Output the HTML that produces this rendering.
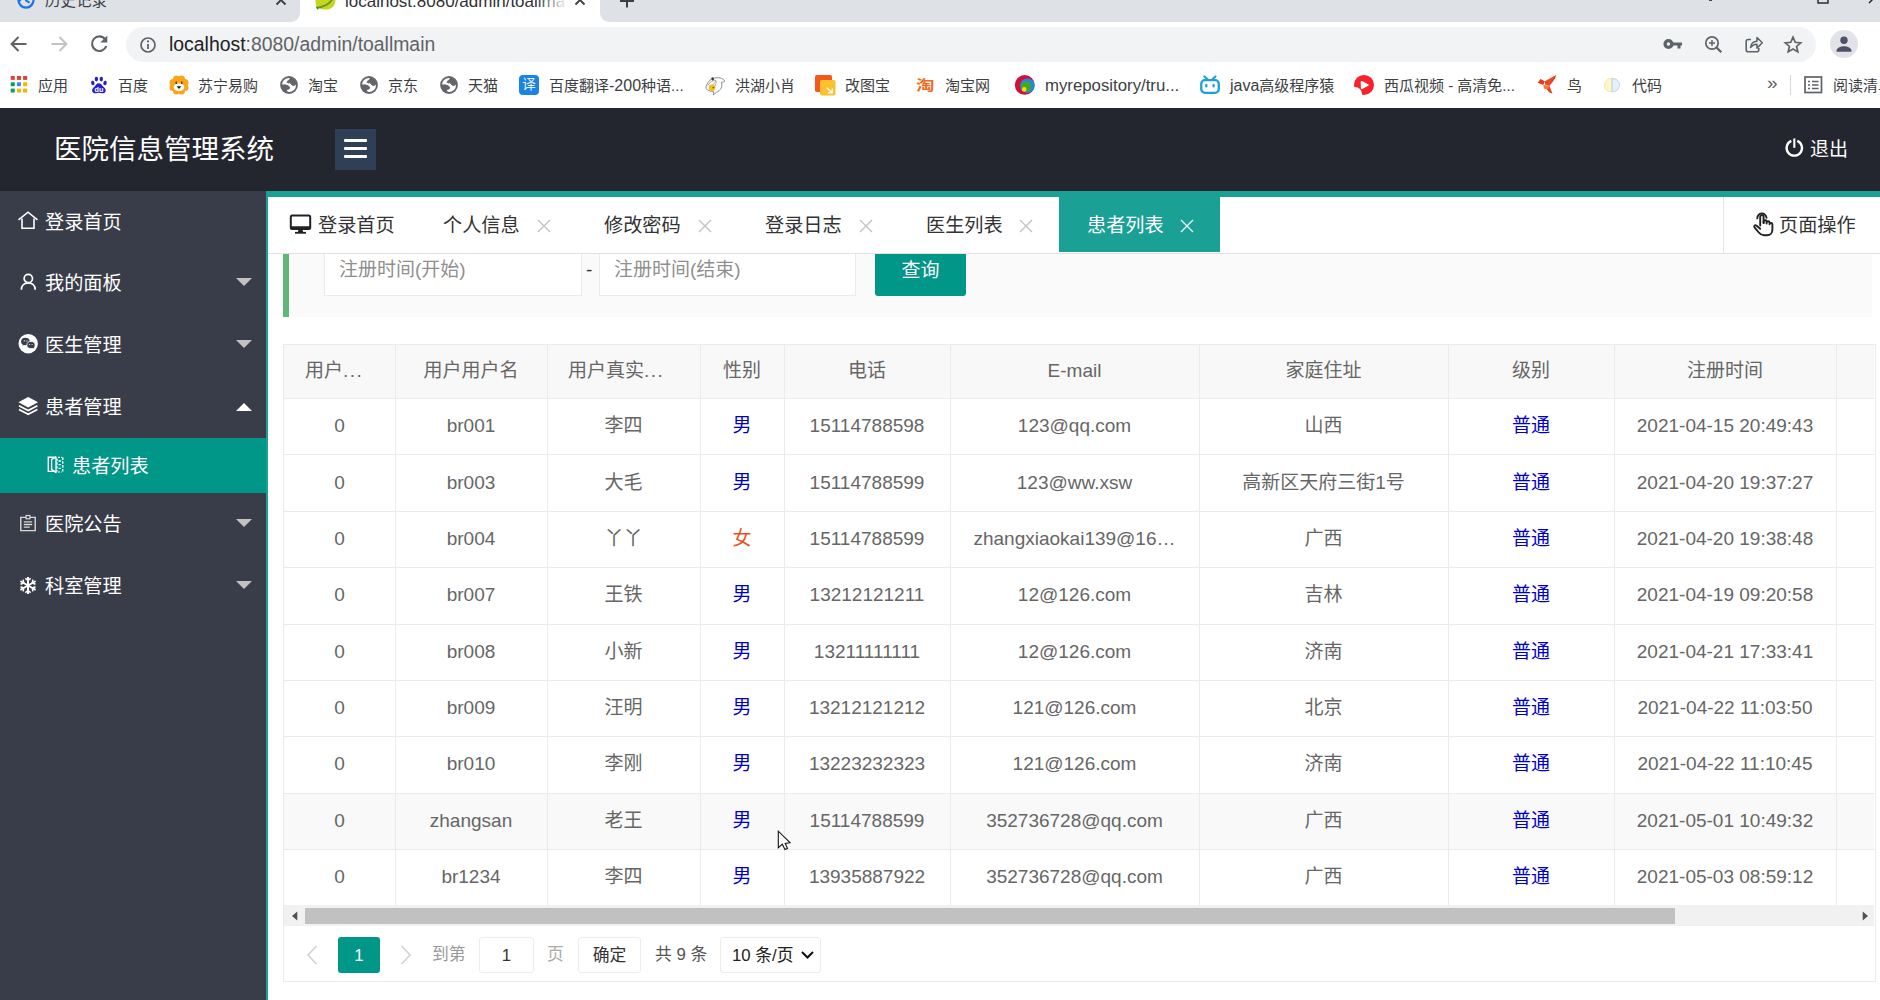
<!DOCTYPE html>
<html lang="zh-CN">
<head>
<meta charset="utf-8">
<title>医院信息管理系统</title>
<style>
*{box-sizing:border-box;margin:0;padding:0}
html,body{width:1880px;height:1000px;overflow:hidden;background:#fff}
body{font-family:"Liberation Sans","Noto Sans CJK SC",sans-serif;color:#333;position:relative}
.abs{position:absolute}
svg{display:block}
/* ---------- browser chrome ---------- */
#tabstrip{left:0;top:0;width:1880px;height:22px;background:#fff}
#tab1{left:0;top:-14px;width:300px;height:36px;background:#dee1e6;border-radius:0 0 9px 0}
#tab2{left:600px;top:-14px;width:1280px;height:36px;background:#dee1e6;border-radius:0 0 0 9px}
.tabtxt{font-size:16px;line-height:20px;white-space:nowrap;color:#3c4043}
#toolbar{left:0;top:22px;width:1880px;height:43px;background:#fff}
#omni{left:126px;top:27px;width:1690px;height:35px;border-radius:17.5px;background:#f1f3f4}
#url{left:169px;top:32px;font-size:19.4px;line-height:24px;color:#5f6368;white-space:nowrap}
#url b{font-weight:normal;color:#202124}
#bookbar{left:0;top:65px;width:1880px;height:43px;background:#fff}
.bk{top:76px;font-size:15px;line-height:20px;color:#3c4043;white-space:nowrap}
.ico{top:75px;width:20px;height:20px}
/* ---------- app ---------- */
#header{left:0;top:108px;width:1880px;height:83px;background:#23262e}
#logo{left:54px;top:130px;font-size:27.5px;line-height:40px;color:#fff;white-space:nowrap}
#hamb{left:335px;top:129px;width:41px;height:41px;background:#2f4056}
#hamb i{position:absolute;left:9px;width:22.5px;height:3px;background:#fff;border-radius:1px}
#logout{left:1810px;top:137px;font-size:19px;line-height:26px;color:#fff;white-space:nowrap}
#side{left:0;top:191px;width:266px;height:809px;background:#393d49}
.nav{left:45px;font-size:19.2px;line-height:28px;color:#fff;white-space:nowrap}
.arr{left:236px;width:0;height:0;border-left:8px solid transparent;border-right:8px solid transparent}
.arr.d{border-top:8px solid #c2c2c2}
.arr.u{border-bottom:8px solid #fff}
#navact{left:0;top:438px;width:266px;height:55px;background:#009688}
#tealtop{left:266px;top:191px;width:1614px;height:6px;background:#1aa094}
#tealleft{left:266px;top:191px;width:2px;height:809px;background:#1aa094}
/* tabs */
#tabbar{left:268px;top:197px;width:1612px;height:57px;background:#fff;border-bottom:1px solid #e2e2e2}
.tt{top:212px;font-size:19.2px;line-height:28px;color:#333;white-space:nowrap}
.tx{top:218px;width:16px;height:16px}
#tabact{left:1059px;top:197px;width:161px;height:55px;background:#1aa094}
#pageop{left:1723px;top:197px;width:157px;height:56px;border-left:1px solid #e6e6e6;background:#fff}
/* quote / search */
#quote{left:283px;top:254px;width:1589px;height:63px;background:#fafafa;border-left:6px solid #5fb878}
.inp{top:254px;height:42px;background:#fff;border:1px solid #ebebeb;border-top:none;font-size:19px;line-height:32px;color:#8f8f8f;padding-left:14px;white-space:nowrap}
#btn{left:875px;top:254px;width:91px;height:42px;background:#009688;border-radius:0 0 3px 3px;color:#fff;font-size:19px;line-height:34px;text-align:center}
/* table */
#tbl{left:283px;top:344px;width:1593px;height:638px;border:1px solid #ebebeb;background:#fff}
#thead{left:284px;top:345px;width:1590px;height:53px;background:#f8f8f8}
.hl{left:284px;width:1590px;height:1px;background:#ebebeb}
.vl{top:345px;width:1px;height:560px;background:#ebebeb}
.c{position:absolute;font-size:19px;line-height:28px;color:#666;text-align:center;white-space:nowrap}
.blue{color:#0000c8}
.red{color:#e8501e}
#hov{left:284px;top:793px;width:1590px;height:56px;background:#f9f9f9}
/* scrollbar */
#sb{left:284px;top:905px;width:1590px;height:21px;background:#f1f1f1}
#sbt{left:305px;top:908px;width:1370px;height:16px;background:#c1c1c1}
/* pager */
.pg{font-size:16.8px;line-height:24px;white-space:nowrap;color:#333}
</style>
</head>
<body>
<!-- BROWSER CHROME -->
<div id="tabstrip" class="abs"></div>
<div id="tab1" class="abs"></div>
<div id="tab2" class="abs"></div>
<div id="toolbar" class="abs"></div>
<div id="omni" class="abs"></div>
<div id="url" class="abs"><b>localhost</b>:8080/admin/toallmain</div>
<div id="bookbar" class="abs"></div>
<!--CHROME-ITEMS-->
<svg class="abs" style="left:16px;top:-10px" width="20" height="20" viewBox="0 0 20 20"><circle cx="10" cy="10" r="7.6" fill="none" stroke="#1a73e8" stroke-width="2.2"/><path d="M10 5.500v5l3.500 2.200" stroke="#1a73e8" stroke-width="2" fill="none"/><path d="M0 6.500h6.500v6.500z" fill="#e3e5e9"/><path d="M0.500 8.500l3 3.800 3.600-3.800z" fill="#1a73e8"/></svg>
<div class="abs tabtxt" style="left:45px;top:-9.500px;font-size:15.500px">历史记录</div>
<svg class="abs" style="left:274px;top:-7px" width="14" height="14" viewBox="0 0 14 14"><path d="M2.500 2.500l9 9M11.500 2.500l-9 9" stroke="#3c4043" stroke-width="1.9" fill="none"/></svg>
<svg class="abs" style="left:314px;top:-12px" width="23" height="23" viewBox="0 0 23 23"><path d="M1.500 12C1.500 4 6 0 11.500 0S21.500 4 21.500 12c0 5-3.500 9.500-9 9.500-3 0-6-0.300-8.500-1.500C2 19 1.500 15.500 1.500 12z" fill="#c4d524"/><path d="M3.200 19.600C10 19 16.500 15.500 18.600 10.500" stroke="#6c9714" stroke-width="1.900" fill="none" stroke-linecap="round"/><path d="M3 19.200l0.800 1.600" stroke="#4f7f1a" stroke-width="1.400" stroke-linecap="round"/></svg>
<div class="abs tabtxt" style="left:345px;top:-8.500px;width:221px;overflow:hidden;font-size:17px;color:#303134">localhost:8080/admin/toallmain</div>
<div class="abs" style="left:536px;top:-10px;width:32px;height:22px;background:linear-gradient(90deg,rgba(255,255,255,0),#fff)"></div>
<svg class="abs" style="left:573px;top:-7px" width="14" height="14" viewBox="0 0 14 14"><path d="M2.500 2.500l9 9M11.500 2.500l-9 9" stroke="#3c4043" stroke-width="1.900" fill="none"/></svg>
<svg class="abs" style="left:619px;top:-7.5px" width="16" height="16" viewBox="0 0 16 16"><path d="M8 1v13.500M1 8h14" stroke="#3c4043" stroke-width="2" fill="none"/></svg>
<svg class="abs" style="left:1704px;top:-8px" width="14" height="12" viewBox="0 0 14 12"><path d="M5 8.300h3" stroke="#202124" stroke-width="1"/></svg>
<svg class="abs" style="left:1817px;top:-8px" width="14" height="12" viewBox="0 0 14 12"><rect x="1" y="1" width="10" height="10" fill="none" stroke="#202124" stroke-width="1.400"/></svg>
<svg class="abs" style="left:1868px;top:-8px" width="14" height="12" viewBox="0 0 14 12"><path d="M1 11L12 0" stroke="#202124" stroke-width="1.400"/></svg>
<svg class="abs" style="left:9px;top:34px" width="20" height="20" viewBox="0 0 20 20"><path d="M17.500 10H3M9.500 3L2.600 10l6.900 7" stroke="#5f6368" stroke-width="2" fill="none"/></svg>
<svg class="abs" style="left:49px;top:34px" width="20" height="20" viewBox="0 0 20 20"><path d="M2.500 10H17M10.500 3l6.900 7-6.900 7" stroke="#c0c3c7" stroke-width="2" fill="none"/></svg>
<svg class="abs" style="left:88px;top:33px" width="22" height="22" viewBox="0 0 22 22"><path d="M17.200 6.300A7.300 7.300 0 1 0 18.300 13" stroke="#5f6368" stroke-width="2.100" fill="none"/><path d="M19.300 2.500v7h-7z" fill="#5f6368"/></svg>
<svg class="abs" style="left:139px;top:36px" width="18" height="18" viewBox="0 0 18 18"><circle cx="9" cy="9" r="7" fill="none" stroke="#5f6368" stroke-width="1.700"/><path d="M9 8v5" stroke="#5f6368" stroke-width="1.800"/><circle cx="9" cy="5.400" r="1.100" fill="#5f6368"/></svg>
<svg class="abs" style="left:1663px;top:35px" width="20" height="18" viewBox="0 0 20 18"><circle cx="5.500" cy="9" r="3.400" fill="none" stroke="#5f6368" stroke-width="3.400"/><path d="M9 9h10M16 9v4.500" stroke="#5f6368" stroke-width="3" fill="none"/></svg>
<svg class="abs" style="left:1702px;top:33px" width="22" height="22" viewBox="0 0 22 22"><circle cx="10" cy="10" r="6.200" fill="none" stroke="#5f6368" stroke-width="1.700"/><path d="M10 7v6M7 10h6" stroke="#5f6368" stroke-width="1.500"/><path d="M14.500 14.500l4.800 4.800" stroke="#5f6368" stroke-width="2.200"/></svg>
<svg class="abs" style="left:1743px;top:34px" width="22" height="20" viewBox="0 0 22 20"><path d="M8 5.500H5.200a2 2 0 0 0-2 2v8.300a2 2 0 0 0 2 2h8.600a2 2 0 0 0 2-2V14" stroke="#5f6368" stroke-width="1.600" fill="none"/><path d="M7.500 13.500c0.500-4 3-6 6.500-6.200V3.500l5.300 5.300-5.300 5.300v-3.800c-2.700 0-4.800 0.900-6.500 3.200z" stroke="#5f6368" stroke-width="1.500" fill="none" stroke-linejoin="round"/></svg>
<svg class="abs" style="left:1782px;top:33px" width="22" height="22" viewBox="0 0 22 22"><path transform="translate(11 12.200) scale(0.890) translate(-11 -11.800)" d="M11 2.800l2.500 5.700 6.200 0.600-4.700 4.100 1.400 6.100L11 16.100l-5.400 3.200 1.400-6.100L2.300 9.100l6.200-0.600z" stroke="#5f6368" stroke-width="1.900" fill="none" stroke-linejoin="miter"/></svg>
<svg class="abs" style="left:1830px;top:30px" width="28" height="28" viewBox="0 0 28 28"><circle cx="14" cy="14" r="14" fill="#e1e3e9"/><circle cx="14" cy="10.300" r="3.700" fill="#4d5269"/><path d="M6.500 21c0-3.600 4.800-4.800 7.500-4.800s7.500 1.200 7.500 4.800v0.800h-15z" fill="#4d5269"/></svg>
<!--/CHROME-ITEMS-->
<!--BOOK-ITEMS-->
<svg class="abs" style="left:10px;top:75px" width="18" height="19" viewBox="0 0 18 19"><rect x="0.7" y="1.0" width="4.100" height="3.900" fill="#db4437"/><rect x="6.9" y="1.0" width="4.100" height="3.900" fill="#db4437"/><rect x="13.1" y="1.0" width="4.100" height="3.900" fill="#db4437"/><rect x="0.7" y="7.3" width="4.100" height="3.900" fill="#0f9d58"/><rect x="6.9" y="7.3" width="4.100" height="3.900" fill="#4285f4"/><rect x="13.1" y="7.3" width="4.100" height="3.900" fill="#f4b400"/><rect x="0.7" y="13.6" width="4.100" height="3.900" fill="#0f9d58"/><rect x="6.9" y="13.6" width="4.100" height="3.900" fill="#f4b400"/><rect x="13.1" y="13.6" width="4.100" height="3.900" fill="#f4b400"/></svg>
<div class="abs bk" style="left:38px">应用</div>
<svg class="abs" style="left:89px;top:75px" width="20" height="20" viewBox="0 0 20 20"><g fill="#2a20c8"><ellipse cx="3.800" cy="8" rx="1.700" ry="2.200" transform="rotate(-12 3.800 8)"/><ellipse cx="7.400" cy="4.100" rx="1.700" ry="2.400"/><ellipse cx="12.300" cy="4.100" rx="1.700" ry="2.400"/><ellipse cx="16" cy="8" rx="1.700" ry="2.200" transform="rotate(12 16 8)"/><path d="M9.800 8.200C7.600 8.200 6.900 10 5.600 11.500 4.100 13 2.900 14 3.100 16c0.300 2.200 2.500 2.500 4 2.200 1.200-0.200 1.900-0.400 2.800-0.400s1.600 0.200 2.800 0.400c1.500 0.300 3.700 0 4-2.200 0.200-2-1-3-2.500-4.500C12.800 10 12 8.200 9.800 8.200z"/></g><text x="9.900" y="16.700" font-size="7.200" font-weight="bold" fill="#fff" text-anchor="middle" font-family="Liberation Sans,sans-serif">du</text></svg>
<div class="abs bk" style="left:118px">百度</div>
<svg class="abs" style="left:169px;top:75px" width="20" height="20" viewBox="0 0 20 20"><g fill="#f9a61a"><circle cx="16.01" cy="12.49" r="3.500"/><circle cx="12.49" cy="16.01" r="3.500"/><circle cx="7.51" cy="16.01" r="3.500"/><circle cx="3.99" cy="12.49" r="3.500"/><circle cx="3.99" cy="7.51" r="3.500"/><circle cx="7.51" cy="3.99" r="3.500"/><circle cx="12.49" cy="3.99" r="3.500"/><circle cx="16.01" cy="7.51" r="3.500"/><circle cx="10" cy="10" r="7.500"/></g><path d="M4.800 12.200c0-2.600 2.300-3.700 5.200-3.700s5.200 1.100 5.200 3.700c0 2.300-2.300 3.900-5.200 3.900s-5.200-1.600-5.200-3.900z" fill="#fff"/><path d="M7.600 11.300h4.800L10 13.900z" fill="#1a1a1a"/><path d="M7.200 6.600v2.300M12.800 6.600v2.300" stroke="#3a2a10" stroke-width="1.200"/></svg>
<div class="abs bk" style="left:198px">苏宁易购</div>
<svg class="abs" style="left:280px;top:76px" width="18" height="18" viewBox="0 0 18 18"><circle cx="9" cy="9" r="8.900" fill="#636569"/><circle cx="9" cy="9" r="7.100" fill="#fff"/><path d="M10 1.800L13.800 2.500 16.200 4.900 16.400 7.300 15.200 9 13.600 9.500 11.900 9 10.900 7.600 9.500 6.800 7.800 7.100 7.100 6.400 7.600 4.900 9.200 4 10 2.800z" fill="#636569" stroke="#636569" stroke-width="0.800" stroke-linejoin="round"/><path d="M1.600 9L4.900 8.800 7.800 9.500 9.500 10.900 9.700 12.400 9 13 7.300 13.300 6.700 14.600 7.300 16.200 4.200 15.200 1.800 12.600z" fill="#636569" stroke="#636569" stroke-width="0.800" stroke-linejoin="round"/></svg>
<div class="abs bk" style="left:308px">淘宝</div>
<svg class="abs" style="left:360px;top:76px" width="18" height="18" viewBox="0 0 18 18"><circle cx="9" cy="9" r="8.900" fill="#636569"/><circle cx="9" cy="9" r="7.100" fill="#fff"/><path d="M10 1.800L13.800 2.500 16.200 4.900 16.400 7.300 15.200 9 13.600 9.500 11.900 9 10.900 7.600 9.500 6.800 7.800 7.100 7.100 6.400 7.600 4.900 9.200 4 10 2.800z" fill="#636569" stroke="#636569" stroke-width="0.800" stroke-linejoin="round"/><path d="M1.600 9L4.900 8.800 7.800 9.500 9.500 10.900 9.700 12.400 9 13 7.300 13.300 6.700 14.600 7.300 16.200 4.200 15.200 1.800 12.600z" fill="#636569" stroke="#636569" stroke-width="0.800" stroke-linejoin="round"/></svg>
<div class="abs bk" style="left:388px">京东</div>
<svg class="abs" style="left:440px;top:76px" width="18" height="18" viewBox="0 0 18 18"><circle cx="9" cy="9" r="8.900" fill="#636569"/><circle cx="9" cy="9" r="7.100" fill="#fff"/><path d="M10 1.800L13.800 2.500 16.200 4.900 16.400 7.300 15.200 9 13.600 9.500 11.900 9 10.900 7.600 9.500 6.800 7.800 7.100 7.100 6.400 7.600 4.900 9.200 4 10 2.800z" fill="#636569" stroke="#636569" stroke-width="0.800" stroke-linejoin="round"/><path d="M1.600 9L4.900 8.800 7.800 9.500 9.500 10.900 9.700 12.400 9 13 7.300 13.300 6.700 14.600 7.300 16.200 4.200 15.200 1.800 12.600z" fill="#636569" stroke="#636569" stroke-width="0.800" stroke-linejoin="round"/></svg>
<div class="abs bk" style="left:468px">天猫</div>
<div class="abs" style="left:519px;top:75px;width:20px;height:20px;border-radius:4px;background:#1b82e6;color:#e6f6ff;font-size:13.500px;line-height:19px;text-align:center">译</div>
<div class="abs bk" style="left:549px">百度翻译<span style="font-size:16px">-200</span>种语...</div>
<svg class="abs" style="left:704px;top:74px" width="22" height="22" viewBox="0 0 22 22"><path d="M1.800 14.300C2.500 9 6 4.800 10.500 4 14 3.200 18.500 3.600 20.800 7 19.800 8.200 18.300 8.300 17.400 8.400 19 12.500 16.500 16.500 12.500 18.300 11.300 19.300 10.200 20.300 9.200 21 9.500 19.500 9.800 18.500 9.500 17.500 6.500 17.500 3.500 16.500 1.800 14.300z" fill="#fbfbfb" stroke="#8e8e8e" stroke-width="1"/><path d="M3.800 11.500C5.500 8 8.500 6.300 12 6.500 10.800 9 9 11 7.500 11.800M12.500 7.500C11.500 10.500 11 12.500 10.500 14" stroke="#a9a3a6" stroke-width="0.900" fill="none"/><ellipse cx="8.700" cy="4.900" rx="1.300" ry="1.600" fill="#3a3a3a" transform="rotate(-30 8.700 4.900)"/><circle cx="8" cy="13.700" r="3.200" fill="#f2c114"/><path d="M8.500 12.800l2.500 0.800-2.300 1z" fill="#8a3b12"/></svg>
<div class="abs bk" style="left:735px">洪湖小肖</div>
<svg class="abs" style="left:815px;top:75px" width="21" height="21" viewBox="0 0 21 21"><rect x="0" y="0" width="17" height="17" rx="1.800" fill="#f4581f"/><rect x="5" y="5" width="15.500" height="15.500" rx="1.800" fill="#fbc22b"/><path d="M11.800 12.800l5 4.800M17.300 13.500v4.400h-4.400" stroke="#fff" stroke-width="1.400" fill="none"/></svg>
<div class="abs bk" style="left:845px">改图宝</div>
<div class="abs" style="left:917px;top:73px;font-size:16.500px;line-height:24px;color:#f06a20;font-weight:bold;transform:scale(1.120,0.820);transform-origin:50% 50%">淘</div>
<div class="abs bk" style="left:945px">淘宝网</div>
<svg class="abs" style="left:1014px;top:75px" width="21" height="21" viewBox="0 0 21 21"><circle cx="10.700" cy="9.900" r="9.900" fill="#d0103a"/><circle cx="13.400" cy="10.700" r="7.300" fill="#1c8fd6"/><circle cx="12.100" cy="11.800" r="5" fill="#48a51f"/><circle cx="10.200" cy="14.400" r="2.300" fill="#e6e01e"/></svg>
<div class="abs bk" style="left:1045px;font-size:16.800px">myrepository/tru...</div>
<svg class="abs" style="left:1199px;top:74px" width="22" height="21" viewBox="0 0 22 21"><path d="M5.300 2.500l3.300 2.800M16.400 2.500l-3 2.800" stroke="#1fa0d8" stroke-width="2.200" stroke-linecap="round"/><rect x="2.250" y="6.150" width="17.500" height="12.700" rx="3.600" fill="none" stroke="#1fa0d8" stroke-width="2.300"/><ellipse cx="7.300" cy="11.700" rx="1.250" ry="1.900" fill="#1fa0d8"/><ellipse cx="14.600" cy="11.700" rx="1.250" ry="1.900" fill="#1fa0d8"/></svg>
<div class="abs bk" style="left:1230px"><span style="font-size:16px">java</span>高级程序猿</div>
<svg class="abs" style="left:1353px;top:74px" width="22" height="22" viewBox="0 0 22 22"><circle cx="11" cy="10.900" r="10" fill="#f8222d"/><circle cx="2" cy="20" r="7" fill="#fff"/><path d="M8.600 7.900l6.200 3.100-6 3.200z" fill="#fff" stroke="#fff" stroke-width="1.800" stroke-linejoin="round"/></svg>
<div class="abs bk" style="left:1384px">西瓜视频 - 高清免...</div>
<svg class="abs" style="left:1536px;top:74px" width="22" height="22" viewBox="0 0 22 22"><path d="M1.700 8.800L4.500 5l4.300 2.300-1.500 3.600z" fill="#e5391f"/><path d="M8.800 7.300L20 1.100l-1 3.100-5.600 7.700-4.100-1z" fill="#ea4a22"/><path d="M13.400 11.900L19 4.200 20 1.100z" fill="#cf2c17"/><path d="M7.300 10.900l6.100 1-2.500 3.500-3.100-1z" fill="#f57a35"/><path d="M10.900 15.400l2.500-3.500 3.100 7.600-3.100-1z" fill="#e8431f"/></svg>
<div class="abs bk" style="left:1567px">鸟</div>
<svg class="abs" style="left:1603px;top:77px" width="18" height="18" viewBox="0 0 18 18"><path d="M8.800 1.200a7.300 6.900 0 0 0 0 13.800z" fill="#fdf7cf" stroke="#f2e88e" stroke-width="0.900"/><path d="M9.200 1.200a7.300 6.900 0 0 1 0 13.800z" fill="#e6f0f9" stroke="#b9d1e8" stroke-width="0.900"/></svg>
<div class="abs bk" style="left:1632px">代码</div>
<div class="abs" style="left:1767px;top:71px;font-size:19px;line-height:24px;color:#5f6368">»</div>
<div class="abs" style="left:1790px;top:75px;width:1px;height:20px;background:#d5d7da"></div>
<svg class="abs" style="left:1804px;top:76px" width="19" height="18" viewBox="0 0 19 18"><rect x="1" y="1" width="16.500" height="15.500" fill="none" stroke="#5f6368" stroke-width="1.700"/><path d="M4 5.500h2M4 9h2M4 12.500h2M8 5.500h6.500M8 9h6.500M8 12.500h6.500" stroke="#5f6368" stroke-width="1.700"/></svg>
<div class="abs bk" style="left:1833px">阅读清单</div>
<!--/BOOK-ITEMS-->

<!-- APP HEADER -->
<div id="header" class="abs"></div>
<div id="logo" class="abs">医院信息管理系统</div>
<div id="hamb" class="abs"><i style="top:10px"></i><i style="top:18px"></i><i style="top:26px"></i></div>
<div id="logout" class="abs">退出</div>

<!-- SIDEBAR -->
<div id="side" class="abs"></div>
<div id="navact" class="abs"></div>
<!--SIDE-ITEMS-->
<div class="abs nav" style="top:209px">登录首页</div>
<div class="abs nav" style="top:270px">我的面板</div>
<div class="abs arr d" style="top:278px"></div>
<div class="abs nav" style="top:332px">医生管理</div>
<div class="abs arr d" style="top:340px"></div>
<div class="abs nav" style="top:394px">患者管理</div>
<div class="abs arr u" style="top:403px"></div>
<div class="abs nav" style="top:511px">医院公告</div>
<div class="abs arr d" style="top:519px"></div>
<div class="abs nav" style="top:573px">科室管理</div>
<div class="abs arr d" style="top:581px"></div>
<div class="abs nav" style="left:72px;top:453px">患者列表</div>
<!--/SIDE-ITEMS-->
<!--HEADER-ICONS-->
<svg class="abs" style="left:1784px;top:137px" width="21" height="22" viewBox="0 0 21 22"><path d="M7.300 3.900A7.700 7.700 0 1 0 13.300 3.900" stroke="#fff" stroke-width="2.300" fill="none"/><path d="M10.300 1.500v9.300" stroke="#fff" stroke-width="2.100"/></svg>
<svg class="abs" style="left:17px;top:210px" width="23" height="21" viewBox="0 0 23 21"><path d="M1.500 9.800L11 2.200l9.500 7.600" stroke="#fff" stroke-width="1.600" fill="none"/><path d="M5 8.500v9.700h12V8.500" stroke="#fff" stroke-width="1.600" fill="none"/></svg>
<svg class="abs" style="left:18px;top:271px" width="21" height="20" viewBox="0 0 21 20"><circle cx="10.300" cy="7.500" r="4.200" fill="none" stroke="#fff" stroke-width="1.700"/><path d="M3.400 18.800c0-4.600 3.200-6.900 6.900-6.900s6.900 2.300 6.900 6.900" stroke="#fff" stroke-width="1.700" fill="none"/></svg>
<svg class="abs" style="left:18px;top:333px" width="21" height="21" viewBox="0 0 21 21"><circle cx="10.200" cy="10.700" r="9.700" fill="#fff"/><ellipse cx="7.400" cy="8.500" rx="4.300" ry="3.800" fill="#393d49"/><path d="M5.200 10.500l-0.700 2.300 2.400-1.200z" fill="#393d49"/><ellipse cx="13" cy="12" rx="4.100" ry="3.600" fill="#393d49" stroke="#fff" stroke-width="0.800"/><path d="M14.500 14.500l1.600 1.300-0.300-2z" fill="#393d49"/><circle cx="6.300" cy="7.900" r="0.600" fill="#fff"/><circle cx="8.900" cy="7.900" r="0.600" fill="#fff"/><circle cx="11.700" cy="11.500" r="0.550" fill="#fff"/><circle cx="14.100" cy="11.500" r="0.550" fill="#fff"/></svg>
<svg class="abs" style="left:18px;top:396px" width="21" height="20" viewBox="0 0 21 20"><path d="M10.200 1L20 6.200l-9.800 5.200L0.400 6.200z" fill="#fff"/><path d="M1 9.700l9.200 4.900 9.200-4.900M1 13.400l9.200 4.900 9.200-4.900" stroke="#fff" stroke-width="1.700" fill="none"/></svg>
<svg class="abs" style="left:47px;top:456px" width="18" height="18" viewBox="0 0 18 18"><path d="M9 1.200H1.300v14.200H9" stroke="#fff" stroke-width="1.400" fill="none"/><path d="M9 1.200L4.600 3.400v10l4.400 3.200z" stroke="#fff" stroke-width="1.300" fill="none" stroke-linejoin="round"/><path d="M10 2.500v13" stroke="#fff" stroke-width="1.200" stroke-dasharray="2.400 1.400"/><path d="M15.800 1.300v15" stroke="#fff" stroke-width="1.300" stroke-dasharray="2.600 1.300"/><path d="M11 1.400h4M11 16h4" stroke="#fff" stroke-width="1.200" stroke-dasharray="2 1.200"/><path d="M11.500 5h2.600M11.500 8.700h2.600M11.500 12.400h2.600" stroke="#fff" stroke-width="1.300"/></svg>
<svg class="abs" style="left:19px;top:514px" width="19" height="18" viewBox="0 0 19 18"><path d="M7 3.400H1.800v13.200h14.400V3.400H11" stroke="#d9d9d9" stroke-width="1.400" fill="none"/><rect x="7.100" y="1.500" width="3.800" height="3.300" fill="none" stroke="#d9d9d9" stroke-width="1.200"/><path d="M4.800 7.800h8.400M4.800 10.500h8.400M4.800 13.200h6" stroke="#d9d9d9" stroke-width="1.300"/></svg>
<svg class="abs" style="left:19px;top:577px" width="18" height="17" viewBox="0 0 18 17"><g stroke="#fff" stroke-width="2" fill="none" stroke-linecap="round"><path d="M9.00 0.50L9.00 16.50"/><path d="M15.93 4.50L2.07 12.50"/><path d="M15.93 12.50L2.07 4.50"/></g><g stroke="#fff" stroke-width="1.600" fill="none"><path d="M9.00 13.70L11.70 15.59"/><path d="M9.00 13.70L6.30 15.59"/><path d="M4.50 11.10L4.21 14.39"/><path d="M4.50 11.10L1.51 9.71"/><path d="M4.50 5.90L1.51 7.29"/><path d="M4.50 5.90L4.21 2.61"/><path d="M9.00 3.30L6.30 1.41"/><path d="M9.00 3.30L11.70 1.41"/><path d="M13.50 5.90L13.79 2.61"/><path d="M13.50 5.90L16.49 7.29"/><path d="M13.50 11.10L16.49 9.71"/><path d="M13.50 11.10L13.79 14.39"/></g></svg>
<!--/HEADER-ICONS-->

<!-- CONTENT FRAME -->
<div id="tealtop" class="abs"></div>
<div id="tealleft" class="abs"></div>
<div id="tabbar" class="abs"></div>
<div id="tabact" class="abs"></div>
<div id="pageop" class="abs"></div>
<!--TAB-ICONS-->
<svg class="abs" style="left:289px;top:214px" width="23" height="21" viewBox="0 0 23 21"><rect x="1.800" y="1.600" width="19.400" height="13.400" rx="1.500" fill="none" stroke="#222" stroke-width="2"/><path d="M1.800 12.300h19.400v2a1 1 0 0 1-1 1H2.800a1 1 0 0 1-1-1z" fill="#222"/><path d="M9.500 15.500h4l0.700 2.800h-5.400z" fill="#222"/><path d="M6 18.800h11" stroke="#222" stroke-width="1.800"/></svg>
<svg class="abs" style="left:1751.5px;top:210px" width="22" height="27" viewBox="0 0 22 27"><path d="M8.200 15.500V6.800a1.700 1.700 0 0 1 3.400 0v6.200" stroke="#222" stroke-width="1.900" fill="none" stroke-linecap="round"/><path d="M5.300 8.400a4.600 4.600 0 1 1 9.200-0.600" stroke="#222" stroke-width="1.900" fill="none" stroke-linecap="round"/><path d="M11.600 13v-1.300a1.500 1.500 0 0 1 3 0V13.500M14.600 13.500v-0.700a1.500 1.500 0 0 1 3 0v1.500M17.600 14.300a1.400 1.400 0 0 1 2.800 0v5.200c0 3.300-2 5.800-5.400 5.800h-3c-2.400 0-3.800-1-5.200-2.800L2.500 17.300c-0.900-1.200 0.500-2.700 1.800-1.800l3.900 3.300" stroke="#222" stroke-width="1.900" fill="none" stroke-linecap="round" stroke-linejoin="round"/></svg>
<!--/TAB-ICONS-->
<!--TAB-ITEMS-->
<div class="abs tt" style="left:318px">登录首页</div>
<div class="abs tt" style="left:443px">个人信息</div>
<svg class="abs tx" style="left:536px" viewBox="0 0 16 16"><path d="M2 2L14 14M14 2L2 14" stroke="#c2c2c2" stroke-width="1.400" fill="none"/></svg>
<div class="abs tt" style="left:604px">修改密码</div>
<svg class="abs tx" style="left:697px" viewBox="0 0 16 16"><path d="M2 2L14 14M14 2L2 14" stroke="#c2c2c2" stroke-width="1.400" fill="none"/></svg>
<div class="abs tt" style="left:765px">登录日志</div>
<svg class="abs tx" style="left:858px" viewBox="0 0 16 16"><path d="M2 2L14 14M14 2L2 14" stroke="#c2c2c2" stroke-width="1.400" fill="none"/></svg>
<div class="abs tt" style="left:926px">医生列表</div>
<svg class="abs tx" style="left:1018px" viewBox="0 0 16 16"><path d="M2 2L14 14M14 2L2 14" stroke="#c2c2c2" stroke-width="1.400" fill="none"/></svg>
<div class="abs tt" style="left:1087px;color:#fff">患者列表</div>
<svg class="abs tx" style="left:1179px" viewBox="0 0 16 16"><path d="M2 2L14 14M14 2L2 14" stroke="#e8f5f3" stroke-width="1.400" fill="none"/></svg>
<div class="abs tt" style="left:1779px">页面操作</div>
<!--/TAB-ITEMS-->

<div id="quote" class="abs"></div>
<div class="abs inp" style="left:324px;width:258px">注册时间(开始)</div>
<div class="abs" style="left:586px;top:258px;font-size:19px;line-height:24px;color:#333">-</div>
<div class="abs inp" style="left:599px;width:257px">注册时间(结束)</div>
<div id="btn" class="abs">查询</div>

<!-- TABLE -->
<div id="tbl" class="abs"></div>
<div id="thead" class="abs"></div>
<div id="hov" class="abs"></div>
<!--TABLE-ITEMS-->
<div class="abs vl" style="left:395px"></div>
<div class="abs vl" style="left:547px"></div>
<div class="abs vl" style="left:700px"></div>
<div class="abs vl" style="left:784px"></div>
<div class="abs vl" style="left:950px"></div>
<div class="abs vl" style="left:1199px"></div>
<div class="abs vl" style="left:1448px"></div>
<div class="abs vl" style="left:1614px"></div>
<div class="abs vl" style="left:1836px"></div>
<div class="abs hl" style="top:398px"></div>
<div class="abs hl" style="top:454px"></div>
<div class="abs hl" style="top:511px"></div>
<div class="abs hl" style="top:567px"></div>
<div class="abs hl" style="top:624px"></div>
<div class="abs hl" style="top:680px"></div>
<div class="abs hl" style="top:736px"></div>
<div class="abs hl" style="top:793px"></div>
<div class="abs hl" style="top:849px"></div>
<div class="c th" style="left:305px;top:357px;text-align:left">用户<span style="letter-spacing:1.5px">...</span></div>
<div class="c th" style="left:395px;width:152px;top:357px">用户用户名</div>
<div class="c th" style="left:568px;top:357px;text-align:left">用户真实<span style="letter-spacing:1.5px">...</span></div>
<div class="c th" style="left:700px;width:84px;top:357px">性别</div>
<div class="c th" style="left:784px;width:166px;top:357px">电话</div>
<div class="c th" style="left:950px;width:249px;top:357px">E-mail</div>
<div class="c th" style="left:1199px;width:249px;top:357px">家庭住址</div>
<div class="c th" style="left:1448px;width:166px;top:357px">级别</div>
<div class="c th" style="left:1614px;width:222px;top:357px">注册时间</div>
<div class="c" style="left:284px;width:111px;top:412px">0</div>
<div class="c" style="left:395px;width:152px;top:412px">br001</div>
<div class="c" style="left:547px;width:153px;top:412px">李四</div>
<div class="c blue" style="left:700px;width:84px;top:412px">男</div>
<div class="c" style="left:784px;width:166px;top:412px">15114788598</div>
<div class="c" style="left:950px;width:249px;top:412px">123@qq.com</div>
<div class="c" style="left:1199px;width:249px;top:412px">山西</div>
<div class="c blue" style="left:1448px;width:166px;top:412px">普通</div>
<div class="c" style="left:1614px;width:222px;top:412px">2021-04-15 20:49:43</div>
<div class="c" style="left:284px;width:111px;top:469px">0</div>
<div class="c" style="left:395px;width:152px;top:469px">br003</div>
<div class="c" style="left:547px;width:153px;top:469px">大毛</div>
<div class="c blue" style="left:700px;width:84px;top:469px">男</div>
<div class="c" style="left:784px;width:166px;top:469px">15114788599</div>
<div class="c" style="left:950px;width:249px;top:469px">123@ww.xsw</div>
<div class="c" style="left:1199px;width:249px;top:469px">高新区天府三街1号</div>
<div class="c blue" style="left:1448px;width:166px;top:469px">普通</div>
<div class="c" style="left:1614px;width:222px;top:469px">2021-04-20 19:37:27</div>
<div class="c" style="left:284px;width:111px;top:525px">0</div>
<div class="c" style="left:395px;width:152px;top:525px">br004</div>
<div class="c" style="left:547px;width:153px;top:525px">丫丫</div>
<div class="c red" style="left:700px;width:84px;top:525px">女</div>
<div class="c" style="left:784px;width:166px;top:525px">15114788599</div>
<div class="c" style="left:950px;width:249px;top:525px">zhangxiaokai139@16…</div>
<div class="c" style="left:1199px;width:249px;top:525px">广西</div>
<div class="c blue" style="left:1448px;width:166px;top:525px">普通</div>
<div class="c" style="left:1614px;width:222px;top:525px">2021-04-20 19:38:48</div>
<div class="c" style="left:284px;width:111px;top:581px">0</div>
<div class="c" style="left:395px;width:152px;top:581px">br007</div>
<div class="c" style="left:547px;width:153px;top:581px">王铁</div>
<div class="c blue" style="left:700px;width:84px;top:581px">男</div>
<div class="c" style="left:784px;width:166px;top:581px">13212121211</div>
<div class="c" style="left:950px;width:249px;top:581px">12@126.com</div>
<div class="c" style="left:1199px;width:249px;top:581px">吉林</div>
<div class="c blue" style="left:1448px;width:166px;top:581px">普通</div>
<div class="c" style="left:1614px;width:222px;top:581px">2021-04-19 09:20:58</div>
<div class="c" style="left:284px;width:111px;top:638px">0</div>
<div class="c" style="left:395px;width:152px;top:638px">br008</div>
<div class="c" style="left:547px;width:153px;top:638px">小新</div>
<div class="c blue" style="left:700px;width:84px;top:638px">男</div>
<div class="c" style="left:784px;width:166px;top:638px">13211111111</div>
<div class="c" style="left:950px;width:249px;top:638px">12@126.com</div>
<div class="c" style="left:1199px;width:249px;top:638px">济南</div>
<div class="c blue" style="left:1448px;width:166px;top:638px">普通</div>
<div class="c" style="left:1614px;width:222px;top:638px">2021-04-21 17:33:41</div>
<div class="c" style="left:284px;width:111px;top:694px">0</div>
<div class="c" style="left:395px;width:152px;top:694px">br009</div>
<div class="c" style="left:547px;width:153px;top:694px">汪明</div>
<div class="c blue" style="left:700px;width:84px;top:694px">男</div>
<div class="c" style="left:784px;width:166px;top:694px">13212121212</div>
<div class="c" style="left:950px;width:249px;top:694px">121@126.com</div>
<div class="c" style="left:1199px;width:249px;top:694px">北京</div>
<div class="c blue" style="left:1448px;width:166px;top:694px">普通</div>
<div class="c" style="left:1614px;width:222px;top:694px">2021-04-22 11:03:50</div>
<div class="c" style="left:284px;width:111px;top:750px">0</div>
<div class="c" style="left:395px;width:152px;top:750px">br010</div>
<div class="c" style="left:547px;width:153px;top:750px">李刚</div>
<div class="c blue" style="left:700px;width:84px;top:750px">男</div>
<div class="c" style="left:784px;width:166px;top:750px">13223232323</div>
<div class="c" style="left:950px;width:249px;top:750px">121@126.com</div>
<div class="c" style="left:1199px;width:249px;top:750px">济南</div>
<div class="c blue" style="left:1448px;width:166px;top:750px">普通</div>
<div class="c" style="left:1614px;width:222px;top:750px">2021-04-22 11:10:45</div>
<div class="c" style="left:284px;width:111px;top:807px">0</div>
<div class="c" style="left:395px;width:152px;top:807px">zhangsan</div>
<div class="c" style="left:547px;width:153px;top:807px">老王</div>
<div class="c blue" style="left:700px;width:84px;top:807px">男</div>
<div class="c" style="left:784px;width:166px;top:807px">15114788599</div>
<div class="c" style="left:950px;width:249px;top:807px">352736728@qq.com</div>
<div class="c" style="left:1199px;width:249px;top:807px">广西</div>
<div class="c blue" style="left:1448px;width:166px;top:807px">普通</div>
<div class="c" style="left:1614px;width:222px;top:807px">2021-05-01 10:49:32</div>
<div class="c" style="left:284px;width:111px;top:863px">0</div>
<div class="c" style="left:395px;width:152px;top:863px">br1234</div>
<div class="c" style="left:547px;width:153px;top:863px">李四</div>
<div class="c blue" style="left:700px;width:84px;top:863px">男</div>
<div class="c" style="left:784px;width:166px;top:863px">13935887922</div>
<div class="c" style="left:950px;width:249px;top:863px">352736728@qq.com</div>
<div class="c" style="left:1199px;width:249px;top:863px">广西</div>
<div class="c blue" style="left:1448px;width:166px;top:863px">普通</div>
<div class="c" style="left:1614px;width:222px;top:863px">2021-05-03 08:59:12</div>
<!--/TABLE-ITEMS-->

<div id="sb" class="abs"></div>
<div id="sbt" class="abs"></div>
<!--PAGER-ITEMS-->
<svg class="abs" style="left:305px;top:944px" width="14" height="22" viewBox="0 0 14 22"><path d="M11.5 2L3 11l8.500 9" stroke="#d2d2d2" stroke-width="1.6" fill="none"/></svg>
<div class="abs pg" style="left:338px;top:937px;width:42px;height:36px;background:#009688;border-radius:3px;color:#fff;text-align:center;line-height:37px">1</div>
<svg class="abs" style="left:399px;top:944px" width="14" height="22" viewBox="0 0 14 22"><path d="M2.5 2L11 11l-8.500 9" stroke="#d2d2d2" stroke-width="1.6" fill="none"/></svg>
<div class="abs pg" style="left:432px;top:943px;color:#999">到第</div>
<div class="abs pg" style="left:479px;top:937px;width:55px;height:36px;border:1px solid #ececec;border-radius:3px;text-align:center;line-height:35px">1</div>
<div class="abs pg" style="left:547px;top:943px;color:#aaa">页</div>
<div class="abs pg" style="left:578px;top:937px;width:63px;height:36px;border:1px solid #ececec;border-radius:3px;text-align:center;line-height:35px">确定</div>
<div class="abs pg" style="left:655px;top:943px;color:#555">共 9 条</div>
<div class="abs pg" style="left:720px;top:937px;width:101px;height:36px;border:1px solid #ececec;border-radius:3px;padding-left:11px;line-height:35px;color:#222">10 条/页</div>
<svg class="abs" style="left:800px;top:949px" width="15" height="12" viewBox="0 0 15 12"><path d="M2 3l5.500 5.500L13 3" stroke="#111" stroke-width="2" fill="none"/></svg>
<svg class="abs" style="left:284px;top:905px" width="21" height="21" viewBox="0 0 21 21"><path d="M13.300 6.500v9L8 11z" fill="#505050"/></svg>
<svg class="abs" style="left:1854px;top:905px" width="21" height="21" viewBox="0 0 21 21"><path d="M8.700 6.500v9L14 11z" fill="#505050"/></svg>
<!--/PAGER-ITEMS-->
<svg class="abs" style="left:770px;top:825px" width="30" height="30" viewBox="770 825 30 30"><path d="M778.300 831.200V847.700L782.300 844.200L785 849.600L787.500 848.400L785.200 843.400L790 842.700Z" fill="#fff" stroke="#111" stroke-width="1.100" stroke-linejoin="miter"/></svg>
</body>
</html>
